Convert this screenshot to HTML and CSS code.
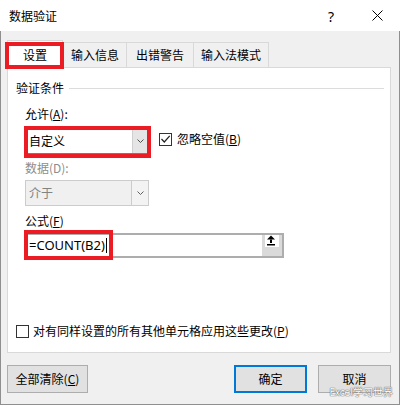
FILE: index.html
```html
<!DOCTYPE html>
<html lang="zh-CN">
<head>
<meta charset="utf-8">
<title>数据验证</title>
<link rel="stylesheet" href="styles.css">
</head>
<body>
<div class="window">
  <div class="titlebar">
    <span class="title">数据验证</span>
    <div class="controls">
      <span class="ctl help">?</span>
      <span class="ctl close">
        <svg width="11" height="11" viewBox="0 0 11 11"><path d="M0.5 0.5 L10.5 10.5 M10.5 0.5 L0.5 10.5" stroke="#000" stroke-width="1" fill="none"/></svg>
      </span>
    </div>
  </div>
  <div class="client">
    <div class="tabs">
      <div class="tab tab-active">设置<span class="mark mark-tab"></span></div>
      <div class="tab tab-w2">输入信息</div>
      <div class="tab tab-w3">出错警告</div>
      <div class="tab tab-w4">输入法模式</div>
    </div>
    <div class="panel">
      <div class="group-head"><span>验证条件</span><i class="rule"></i></div>
      <div class="fields">
        <div class="label label-allow">允许(<u>A</u>):</div>
        <div class="row">
          <div class="combo">
            <span class="value">自定义</span>
            <span class="drop"><svg width="7" height="4" viewBox="0 0 7 4"><polyline points="0.5,0.5 3.5,3.5 6.5,0.5" fill="none" stroke="#505050" stroke-width="1"/></svg></span>
            <span class="mark mark-combo"></span>
          </div>
          <div class="check check-inline">
            <span class="box"><svg width="11" height="11" viewBox="0 0 11 11"><polyline points="1.5,5 4.3,8 9.7,1.8" fill="none" stroke="#222" stroke-width="1.2"/></svg></span>
            <span>忽略空值(<u>B</u>)</span>
          </div>
        </div>
        <div class="label label-data disabled">数据(D):</div>
        <div class="combo combo-disabled">
          <span class="value">介于</span>
          <span class="drop"><svg width="7" height="4" viewBox="0 0 7 4"><polyline points="0.5,0.5 3.5,3.5 6.5,0.5" fill="none" stroke="#606060" stroke-width="1"/></svg></span>
        </div>
        <div class="label label-formula">公式(<u>F</u>)</div>
        <div class="formula">
          <span class="ftext">=COUNT(B2)<i class="caret"></i></span>
          <span class="pick">
            <svg class="pick-icon" width="14" height="12" viewBox="0 0 14 12">
              <rect x="0" y="0" width="14" height="12" fill="#fff"/>
              <polygon points="6,0.5 2,4.5 10,4.5" fill="#000"/>
              <rect x="5" y="4.5" width="2" height="3.5" fill="#000"/>
              <rect x="2" y="9" width="8" height="1.5" fill="#000"/>
            </svg>
          </span>
          <span class="mark mark-formula"></span>
        </div>
      </div>
      <div class="check check-bottom">
        <span class="box"></span>
        <span>对有同样设置的所有其他单元格应用这些更改(<u>P</u>)</span>
      </div>
    </div>
    <div class="actions">
      <button class="btn btn-clear">全部清除(<u>C</u>)</button>
      <div class="actions-right">
        <button class="btn btn-primary">确定</button>
        <button class="btn">取消</button>
      </div>
    </div>
    <span class="watermark">Excel学习世界</span>
  </div>
</div>
</body>
</html>
```

FILE: styles.css
```css
html, body {
  margin: 0;
  padding: 0;
}
body {
  width: 400px;
  height: 405px;
  overflow: hidden;
  font-family: "Noto Sans CJK SC", "Noto Sans", sans-serif;
  font-size: 12px;
  color: #000;
  background: #fff;
}
u {
  text-decoration: underline;
  text-underline-offset: 1px;
}
.window {
  width: 400px;
  height: 405px;
  display: flex;
  flex-direction: column;
  background: #fff;
}
.titlebar {
  height: 31px;
  flex: none;
  display: flex;
  align-items: center;
  justify-content: space-between;
  background: #fff;
}
.title {
  padding-left: 9px;
  line-height: 16px;
}
.controls {
  display: flex;
  height: 31px;
}
.ctl {
  width: 46px;
  display: flex;
  align-items: center;
  justify-content: center;
}
.help {
  font-family: "Noto Sans", sans-serif;
  font-size: 14px;
  padding-top: 1px;
}
.client {
  flex: 1;
  position: relative;
  box-sizing: border-box;
  background: #f0f0f0;
  border: 1px solid #8f8f8f;
  border-top: 0;
  padding: 9px 8px 0 6px;
}
.tabs {
  display: flex;
  align-items: flex-end;
  height: 28px;
  margin-bottom: -1px;
  position: relative;
  z-index: 1;
}
.tab {
  height: 26px;
  box-sizing: border-box;
  border: 1px solid #d9d9d9;
  line-height: 24px;
  text-align: center;
  background: #f0f0f0;
}
.tab-active {
  position: relative;
  width: 56px;
  height: 28px;
  padding-top: 2px;
  border-bottom: 0;
  background: #fff;
}
.tab-w2 { width: 64px; }
.tab-w3 { width: 68px; margin-left: -1px; }
.tab-w4 { width: 76px; margin-left: -1px; }

.mark {
  position: absolute;
  box-sizing: border-box;
  border: 4px solid #ec1c24;
  pointer-events: none;
}
.mark-tab {
  left: -3px;
  top: 1px;
  width: 59px;
  height: 27px;
}
.panel {
  height: 286px;
  box-sizing: border-box;
  background: #fff;
  border: 1px solid #d9d9d9;
  padding: 12px 6px 0 8px;
}
.group-head {
  display: flex;
  align-items: center;
  height: 16px;
  line-height: 16px;
}
.rule {
  flex: 1;
  height: 1px;
  background: #dcdcdc;
  margin-left: 5px;
}
.fields {
  padding-left: 9px;
}
.label {
  line-height: 16px;
}
.label-allow { margin-top: 10px; }
.label-data { margin-top: 6px; }
.label-formula { margin-top: 7px; }
.disabled { color: #8d8d8d; }
.row {
  display: flex;
  align-items: flex-start;
  margin-top: 6px;
}
.combo {
  position: relative;
  width: 124px;
  height: 26px;
  box-sizing: border-box;
  border: 1px solid #7a7a7a;
  background: #fff;
  display: flex;
}
.combo .value {
  flex: 1;
  padding-left: 3px;
  line-height: 24px;
}
.combo .drop {
  width: 15px;
  background: #e5e5e5;
  border-left: 1px solid #cfcfcf;
  display: flex;
  align-items: center;
  justify-content: center;
}
.combo-disabled {
  margin-top: 4px;
  border-color: #cccccc;
  background: #f0f0f0;
  color: #838383;
}
.combo-disabled .drop {
  width: 16px;
  background: #f3f3f3;
  border-left-color: #cccccc;
}
.mark-combo {
  left: -2px;
  top: -3px;
  width: 127px;
  height: 32px;
}
.check {
  display: flex;
  align-items: center;
  line-height: 16px;
}
.box {
  width: 13px;
  height: 13px;
  box-sizing: border-box;
  border: 1px solid #333;
  background: #fff;
  margin-right: 5px;
  display: flex;
}
.check-inline {
  margin-left: 10px;
  margin-top: 3px;
}
.check-bottom {
  margin-top: 65px;
}
.check-bottom .box {
  margin-right: 4px;
}
.formula {
  position: relative;
  margin-top: 4px;
  width: 259px;
  height: 25px;
  box-sizing: border-box;
  border: 2px solid #adadad;
  background: #fff;
  display: flex;
}
.ftext {
  flex: 1;
  display: flex;
  align-items: center;
  padding-left: 2px;
  font-family: "Noto Sans", sans-serif;
  font-size: 13px;
  line-height: 21px;
}
.caret {
  width: 1px;
  height: 15px;
  background: #000;
  margin-left: 1px;
}
.pick {
  width: 20px;
  background: #dadada;
  display: flex;
  align-items: flex-start;
  padding-left: 3px;
  box-sizing: border-box;
}
.pick-icon {
  display: block;
}
.mark-formula {
  left: -3px;
  top: -5px;
  width: 89px;
  height: 30px;
}
.actions {
  display: flex;
  justify-content: space-between;
  margin-top: 12px;
}
.actions-right {
  display: flex;
  gap: 11px;
}
.btn {
  height: 28px;
  width: 73px;
  box-sizing: border-box;
  border: 1px solid #adadad;
  background: #e1e1e1;
  font: inherit;
  color: #000;
  padding: 0;
  line-height: 14px;
}
.btn-clear {
  width: 81px;
}
.btn-primary {
  border: 2px solid #0078d7;
}
.watermark {
  position: absolute;
  right: 6px;
  bottom: 7px;
  font-size: 10px;
  line-height: 10px;
  color: #fff;
  text-shadow: 0 0 1px #666, 0 0 1px #666, 0 0 1px #888;
}
```
